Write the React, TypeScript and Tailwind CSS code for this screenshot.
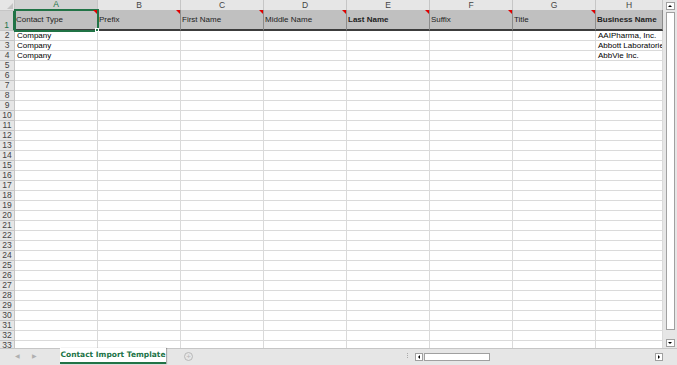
const cols = ["A", "B", "C", "D", "E", "F", "G", "H"];
const headers = ["Contact Type", "Prefix", "First Name", "Middle Name", "Last Name", "Suffix", "Title", "Business Name"];
const bold = [false, false, false, false, true, false, false, true];
const data: Record<number, string[]> = {
  2: ["Company", "", "", "", "", "", "", "AAIPharma, Inc."],
  3: ["Company", "", "", "", "", "", "", "Abbott Laboratories"],
  4: ["Company", "", "", "", "", "", "", "AbbVie Inc."],
};
const rows = Array.from({ length: 32 }, (_, i) => i + 2);
const gridCols = "grid grid-cols-[15px_83px_83px_83px_83px_83px_83px_83px_67px]";

export default function App() {
  return (
    <div className="w-[677px] h-[365px] overflow-hidden bg-white text-[8px] leading-none text-black font-['Liberation_Sans',Arial,sans-serif] flex flex-col">
      <div className="flex h-[348px]">
        <div className="w-[663px] overflow-hidden">
          {/* column letters */}
          <div className={`${gridCols} h-[10px] bg-[#e6e6e6] text-[8.5px]`}>
            <div className="relative border-r border-b border-[#c6c6c6]">
              <div className="absolute right-[1px] bottom-[1px] w-0 h-0 border-l-[6px] border-l-transparent border-b-[6px] border-b-[#c4c4c4]" />
            </div>
            {cols.map((c, i) => (
              <div
                key={c}
                className={
                  i === 0
                    ? "flex items-center justify-center bg-[#d2d2d2] text-[#217346] border-r border-[#c6c6c6] border-b-2 border-b-[#217346]"
                    : "flex items-center justify-center text-[#444] border-r border-b border-[#c6c6c6]"
                }
              >
                {c}
              </div>
            ))}
          </div>
          {/* header row */}
          <div className={`${gridCols} h-[21px]`}>
            <div className="bg-[#d2d2d2] text-[#217346] text-[8.5px] flex items-end justify-center pb-[1px] border-r-2 border-r-[#217346] border-b border-[#c6c6c6]">1</div>
            {headers.map((h, i) => (
              <div
                key={h}
                className={`relative bg-[#c0c0c0] flex items-center pl-[1px] border-r border-[#8c8c8c] border-b-2 border-b-[#3c3c3c] ${bold[i] ? "font-bold" : ""} ${i === 0 ? "outline-2 outline-[#217346] -outline-offset-1 z-10" : ""}`}
              >
                <span className="text-[#222] whitespace-nowrap">{h}</span>
                {i < 7 && (
                  <div className="absolute top-0 right-0 w-0 h-0 border-l-[4px] border-l-transparent border-t-[4px] border-t-[#e00000]" />
                )}
                {i === 0 && <div className="absolute -right-[2px] -bottom-[3px] w-[4px] h-[4px] bg-[#217346] border border-white" />}
              </div>
            ))}
          </div>
          {rows.map((r) => (
            <div key={r} className={`${gridCols} h-[10px]`}>
              <div className="bg-[#e6e6e6] flex items-center justify-center text-[#444] text-[8.5px] border-r border-b border-[#c6c6c6]">{r}</div>
              {cols.map((c, i) => (
                <div key={c} className="flex items-center pl-[2px] whitespace-nowrap overflow-hidden border-r border-b border-[#dadada]">
                  {data[r]?.[i] ?? ""}
                </div>
              ))}
            </div>
          ))}
        </div>
        {/* vertical scrollbar */}
        <div className="w-[14px] bg-[#e6e6e6] flex flex-col items-center pt-[2px] pb-[1px] gap-[1px]">
          <div className="w-[9px] h-[8px] bg-white border border-[#a0a0a0] flex items-center justify-center">
            <div className="w-0 h-0 border-l-[2px] border-r-[2px] border-b-[2px] border-l-transparent border-r-transparent border-b-black" />
          </div>
          <div className="w-[9px] h-[318px] bg-white border border-[#a0a0a0] mt-[1px]" />
          <div className="flex-1" />
          <div className="w-[9px] h-[8px] bg-white border border-[#a0a0a0] flex items-center justify-center">
            <div className="w-0 h-0 border-l-[2px] border-r-[2px] border-t-[2px] border-l-transparent border-r-transparent border-t-black" />
          </div>
        </div>
      </div>
      {/* tab bar */}
      <div className="flex-1 bg-[#e6e6e6] border-t border-[#c6c6c6] flex items-start">
        <div className="w-[60px] flex items-center gap-[12px] pl-[15px] pt-[4px] text-[#b0b0b0] text-[6px]">
          <span>◀</span>
          <span>▶</span>
        </div>
        <div className="w-[106px] h-[16px] -mt-[1px] bg-white border-b-2 border-[#217346] shadow-[1px_0_1px_rgba(0,0,0,0.25)] flex items-center justify-center text-[#217346] font-bold font-['DejaVu_Sans',sans-serif] text-[7.5px]">
          Contact Import Template
        </div>
        <div className="ml-[18px] mt-[3px] w-[9px] h-[9px] rounded-full border border-[#b8b8b8] flex items-center justify-center text-[#b8b8b8] text-[8px] leading-none">+</div>
        <div className="ml-[214px] mt-[4px] flex flex-col gap-[1px]">
          <div className="w-[1px] h-[1px] bg-[#aaa]" />
          <div className="w-[1px] h-[1px] bg-[#aaa]" />
          <div className="w-[1px] h-[1px] bg-[#aaa]" />
        </div>
        <div className="ml-[7px] mt-[3px] w-[248px] h-[10px] flex items-center gap-[1px]">
          <div className="w-[8px] h-[8px] bg-white border border-[#a0a0a0] flex items-center justify-center">
            <div className="w-0 h-0 border-t-[2px] border-b-[2px] border-r-[2px] border-t-transparent border-b-transparent border-r-black" />
          </div>
          <div className="w-[66px] h-[8px] bg-white border border-[#a0a0a0]" />
          <div className="flex-1" />
          <div className="w-[8px] h-[8px] bg-white border border-[#a0a0a0] flex items-center justify-center">
            <div className="w-0 h-0 border-t-[2px] border-b-[2px] border-l-[2px] border-t-transparent border-b-transparent border-l-black" />
          </div>
        </div>
      </div>
    </div>
  );
}
